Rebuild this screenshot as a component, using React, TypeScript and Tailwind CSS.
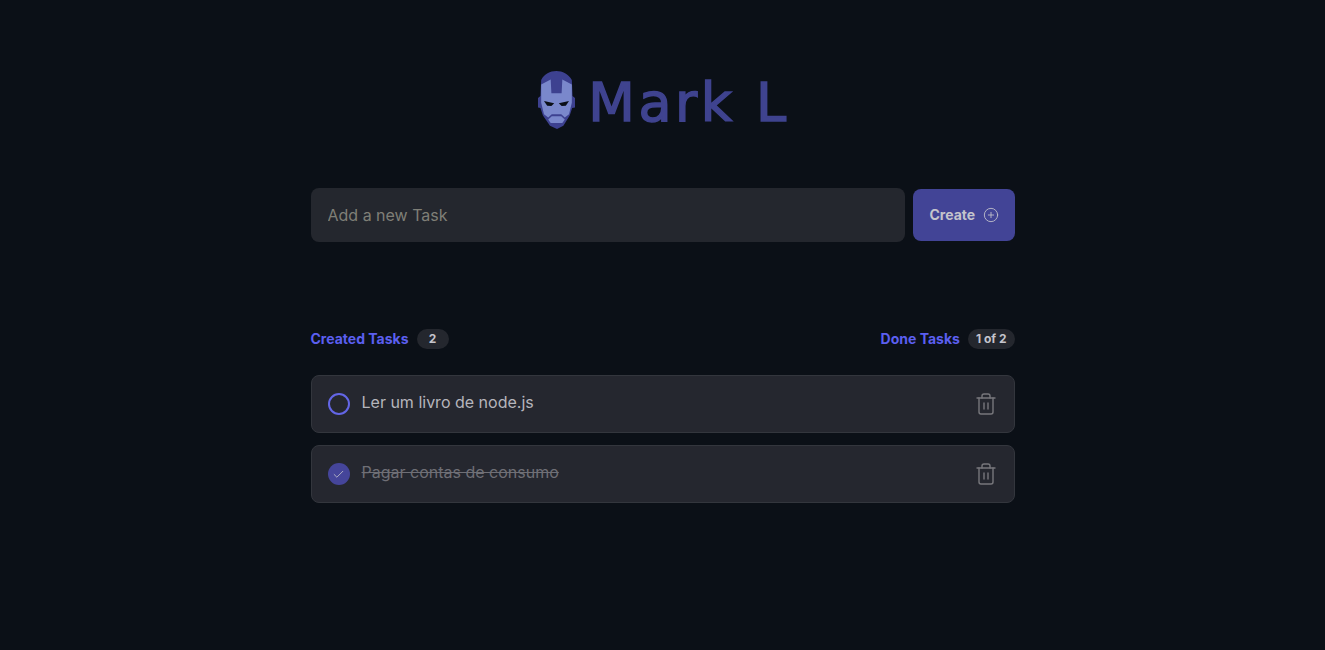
import React from 'react';
import { PlusCircle, Trash2, Check } from 'lucide-react';

const Helmet = () => (
  <svg width="37" height="58" viewBox="24 18 105 172" preserveAspectRatio="none" className="shrink-0">
    <path d="M33 45 C42 26 58 18 76 18 C94 18 110 26 120 45 L122 92 L129 98 L129 126 L121 128 L114 150 L96 180 L78 190 L58 180 L38 150 L31 128 L24 126 L24 98 L31 92 Z" fill="#3d4190" />
    <path d="M33 58 L60 43 L62 84 L91 84 L93 43 L120 58 L120 112 L112 146 L100 156 L90 146 L63 146 L53 156 L41 146 L33 112 Z" fill="#7a88cc" />
    <path d="M41 107 L70 114 L62 122 L50 121 Z" fill="#0b0f17" />
    <path d="M112 107 L83 114 L91 122 L103 121 Z" fill="#0b0f17" />
    <path d="M63 152 L90 152 L100 162 L93 172 L60 172 L53 162 Z" fill="#7a88cc" />
    <path d="M66 176 L88 176 L78 188 Z" fill="#3d4190" />
  </svg>
);

const Stat = ({ label, value }: { label: string; value: string }) => (
  <div className="flex items-center gap-2">
    <span className="text-sm font-bold text-[#5b5ff0]">{label}</span>
    <span className="rounded-full bg-[#24272e] px-2 py-0.5 text-xs font-bold text-[#c4c4cc] min-w-8 text-center">{value}</span>
  </div>
);

const TaskItem = ({ title, done }: { title: string; done?: boolean }) => (
  <li className="flex h-[58px] items-center rounded-lg border border-[#33363d] bg-[#25272f] pl-4 pr-4">
    {done ? (
      <span className="flex size-[22px] items-center justify-center rounded-full bg-[#45459a]">
        <Check size={13} strokeWidth={1.5} className="text-[#c4c4cc]" />
      </span>
    ) : (
      <span className="size-[22px] rounded-full border-2 border-[#6366e6]" />
    )}
    <p className={done ? 'ml-3 flex-1 -mt-1 text-[#6f6f76] line-through' : 'ml-3 flex-1 -mt-1 text-[#b5b5bc]'}>{title}</p>
    <Trash2 size={24} strokeWidth={1.4} className="text-[#77777c]" />
  </li>
);

export default function App() {
  return (
    <div className="min-h-[650px] bg-[#0b1017] font-['Inter',sans-serif]">
      <header className="flex h-[188px] justify-center pt-[71px] pl-[3px]">
        <div className="flex h-[58px] items-center gap-[13px]">
          <Helmet />
          <span className="mt-[5px] font-['DejaVu_Sans',sans-serif] text-[54px] leading-none tracking-[3.5px] text-[#3f438f] [-webkit-text-stroke:1.5px_#3f438f]">
            Mark L
          </span>
        </div>
      </header>
      <main className="mx-auto w-[704px]">
        <form className="flex items-center gap-2">
          <input
            placeholder="Add a new Task"
            className="h-[54px] flex-1 rounded-lg bg-[#24272e] px-[17px] text-base text-[#c4c4cc] placeholder:text-[#7f7f77] outline-none"
          />
          <button type="button" className="flex h-[52px] w-[102px] items-center gap-2 rounded-lg bg-[#424496] pl-[17px] text-sm font-bold text-[#c4c4cc]">
            Create
            <PlusCircle size={16} strokeWidth={1.3} />
          </button>
        </form>
        <section className="mt-[87px] flex items-center justify-between">
          <Stat label="Created Tasks" value="2" />
          <Stat label="Done Tasks" value="1 of 2" />
        </section>
        <ul className="mt-[26px] flex flex-col gap-3">
          <TaskItem title="Ler um livro de node.js" />
          <TaskItem title="Pagar contas de consumo" done />
        </ul>
      </main>
    </div>
  );
}
